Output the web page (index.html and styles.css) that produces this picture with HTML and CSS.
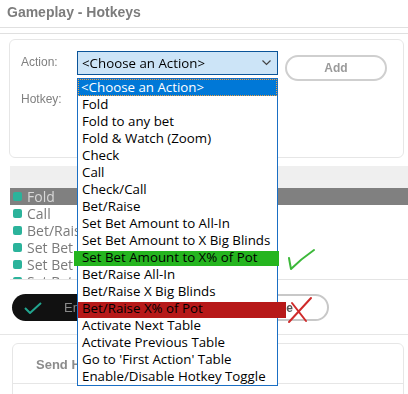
FILE: index.html
```html
<!DOCTYPE html>
<html lang="en">
<head>
    <meta charset="UTF-8">
    <meta name="viewport" content="width=device-width, initial-scale=1.0">
    <title>Gameplay - Hotkeys</title>
    <link rel="stylesheet" href="styles.css">
</head>
<body>

<div class="page">
    <h1 class="title">Gameplay - Hotkeys</h1>
    <div class="rule"></div>
    <div class="rule"></div>

    <section class="card">
        <div class="form-row">
            <label class="field-label">Action:</label>
            <div class="select">
                <span>&lt;Choose an Action&gt;</span>
                <svg class="chevron" width="9" height="6" viewBox="0 0 9 6"><path d="M0.5 0.5 L4.5 4.5 L8.5 0.5" fill="none" stroke="#444" stroke-width="1.2"/></svg>
            </div>
            <button class="btn-add">Add</button>
        </div>
        <div class="form-row">
            <label class="field-label">Hotkey:</label>
        </div>
    </section>

    <section class="hotkeys">
        <div class="list-head"></div>
        <ul class="hotkey-list">
            <li class="selected"><span class="tick"></span>Fold</li>
            <li><span class="tick"></span>Call</li>
            <li><span class="tick"></span>Bet/Raise</li>
            <li><span class="tick"></span>Set Bet Amount</li>
            <li><span class="tick"></span>Set Bet Amount</li>
            <li><span class="tick"></span>Set Bet</li>
        </ul>
    </section>

    <div class="actions">
        <button class="btn-enable">
            <svg width="18" height="12" viewBox="0 0 18 12"><path d="M1 6 L6 11 L17 1" fill="none" stroke="#22a58f" stroke-width="2"/></svg>
            Enable
        </button>
        <button class="btn-remove">Remove</button>
    </div>

    <div class="divider"></div>

    <section class="card send">
        <div class="send-title">Send Hotkeys</div>
    </section>
</div>

<!-- open dropdown of the action select -->
<ul class="dropdown">
    <li class="current">&lt;Choose an Action&gt;</li>
    <li>Fold</li>
    <li>Fold to any bet</li>
    <li>Fold &amp; Watch (Zoom)</li>
    <li>Check</li>
    <li>Call</li>
    <li>Check/Call</li>
    <li>Bet/Raise</li>
    <li>Set Bet Amount to All-In</li>
    <li>Set Bet Amount to X Big Blinds</li>
    <li class="mark-ok">Set Bet Amount to X% of Pot</li>
    <li>Bet/Raise All-In</li>
    <li>Bet/Raise X Big Blinds</li>
    <li class="mark-bad">Bet/Raise X% of Pot</li>
    <li>Activate Next Table</li>
    <li>Activate Previous Table</li>
    <li>Go to 'First Action' Table</li>
    <li>Enable/Disable Hotkey Toggle</li>
</ul>

<svg class="note-ok" width="32" height="24" viewBox="0 0 32 24">
    <path d="M5 10 Q6 16 7 21 Q17 11 30 2" fill="none" stroke="#3cb83a" stroke-width="2" stroke-linecap="round" stroke-linejoin="round"/>
</svg>
<svg class="note-bad" width="30" height="30" viewBox="0 0 30 30">
    <path d="M3 28 L25 4 M6 9 L20 27" fill="none" stroke="#cf2a2a" stroke-width="2" stroke-linecap="round"/>
</svg>

</body>
</html>
```

FILE: styles.css
```css
body {
    margin: 0;
    padding: 0;
    background-color: #fff;
    font-family: "Open Sans", "Liberation Sans", sans-serif;
    width: 408px;
    height: 394px;
    overflow: hidden;
    position: relative;
}

/* background window, slightly out of focus */
.page {
    filter: blur(0.6px);
}

.title {
    margin: 0;
    height: 27px;
    padding: 4px 0 0 7px;
    box-sizing: border-box;
    font-family: "Liberation Sans", sans-serif;
    font-size: 14px;
    font-weight: bold;
    color: #7c7c7c;
}

.rule {
    height: 1px;
    background-color: #e0e0e0;
    margin-bottom: 5px;
}

.card {
    margin: 4px 4px 0 9px;
    height: 119px;
    box-sizing: border-box;
    border: 1px solid #e6e6e6;
    border-radius: 6px;
    padding: 11px 11px 0 11px;
}

.form-row {
    display: flex;
    align-items: flex-start;
}

.form-row + .form-row {
    margin-top: 7px;
}

.field-label {
    width: 56px;
    font-family: "Liberation Sans", sans-serif;
    font-size: 12px;
    color: #808080;
    padding-top: 4px;
}

.select {
    width: 201px;
    height: 24px;
    box-sizing: border-box;
    border: 1px solid #0a5499;
    background-color: #cce4f7;
    display: flex;
    align-items: center;
    justify-content: space-between;
    padding: 0 4px 1px 4px;
    font-size: 13.3px;
    color: #000;
}

.chevron {
    margin-right: 2px;
}

.btn-add {
    margin: 4px 0 0 7px;
    width: 102px;
    height: 26px;
    border: 2px solid #cfcfcf;
    border-radius: 13px;
    background-color: #fff;
    font-family: "Liberation Sans", sans-serif;
    font-size: 12px;
    font-weight: bold;
    color: #9a9a9a;
}

.hotkeys {
    margin: 8px 0 0 10px;
}

.list-head {
    height: 22px;
    background-color: #efefef;
}

.hotkey-list {
    list-style: none;
    margin: 0;
    padding: 0;
    height: 91px;
    overflow: hidden;
    border-bottom: 1px solid #e4e4e4;
}

.hotkey-list li {
    height: 17px;
    display: flex;
    align-items: center;
    font-size: 14px;
    color: #7a7a7a;
    padding-left: 3px;
}

.hotkey-list li.selected {
    background-color: #808080;
    color: #d8d8d8;
}

.tick {
    width: 9px;
    height: 9px;
    border-radius: 2px;
    background-color: #2bb39b;
    margin-right: 5px;
}

.actions {
    display: flex;
    margin: 14px 0 0 12px;
    gap: 10px;
}

.btn-enable {
    width: 188px;
    height: 27px;
    border: none;
    border-radius: 14px;
    background-color: #111;
    color: #8a8a8a;
    font-family: "Liberation Sans", sans-serif;
    font-size: 13px;
    display: flex;
    align-items: center;
    gap: 22px;
    padding-left: 12px;
}

.btn-remove {
    width: 119px;
    height: 27px;
    border: 2px solid #c8c8c8;
    border-radius: 14px;
    background-color: #fff;
    color: #555;
    font-family: "Liberation Sans", sans-serif;
    font-size: 12px;
    font-weight: bold;
}

.divider {
    height: 1px;
    background-color: #e6e6e6;
    margin-top: 13px;
}

.card.send {
    margin: 8px 4px 0 12px;
    height: 60px;
    padding: 0;
}

.send-title {
    font-family: "Liberation Sans", sans-serif;
    font-size: 13px;
    font-weight: bold;
    color: #8c8c8c;
    padding: 13px 0 0 23px;
    height: 40px;
    box-sizing: border-box;
    border-bottom: 1px solid #e6e6e6;
}

/* dropdown overlay */
.dropdown {
    position: absolute;
    left: 77px;
    top: 78px;
    width: 201px;
    box-sizing: border-box;
    margin: 0;
    padding: 0;
    list-style: none;
    background-color: #fff;
    border: 1px solid #1a6fc4;
    z-index: 1;
}

.dropdown li {
    position: relative;
    height: 17px;
    line-height: 17px;
    padding-left: 4px;
    font-size: 13.3px;
    color: #000;
    white-space: nowrap;
}

.dropdown li.current {
    background-color: #0078d7;
    color: #fff;
    outline: 1px dotted #f0a040;
    outline-offset: -1px;
    padding-left: 3px;
}

.dropdown li.mark-ok::before,
.dropdown li.mark-bad::before {
    content: "";
    position: absolute;
    z-index: -1;
}

.dropdown li.mark-ok::before {
    left: -4px;
    right: -2px;
    top: 2px;
    bottom: 0;
    background-color: #25b51f;
}

.dropdown li.mark-bad::before {
    left: 0;
    right: -9px;
    top: 2px;
    bottom: -1px;
    background-color: #b71919;
}

.note-ok {
    position: absolute;
    left: 284px;
    top: 248px;
    z-index: 2;
}

.note-bad {
    position: absolute;
    left: 286px;
    top: 294px;
    z-index: 2;
}
```
